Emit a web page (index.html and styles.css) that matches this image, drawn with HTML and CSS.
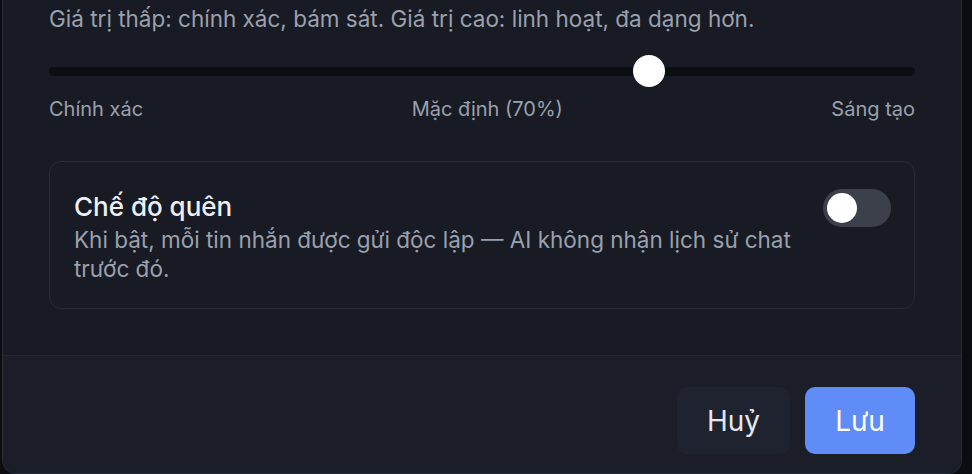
FILE: index.html
```html
<!DOCTYPE html>
<html lang="vi">
<head>
  <meta charset="UTF-8">
  <meta name="viewport" content="width=device-width, initial-scale=1.0">
  <title>Cài đặt</title>
  <link rel="stylesheet" href="styles.css">
</head>
<body>
  <div class="modal">
    <div class="modal-body">
      <p class="hint">Giá trị thấp: chính xác, bám sát. Giá trị cao: linh hoạt, đa dạng hơn.</p>

      <div class="slider">
        <div class="track">
          <span class="thumb" style="left: calc((100% - 32px) * 0.7)"></span>
        </div>
      </div>
      <div class="slider-labels">
        <span>Chính xác</span>
        <span>Mặc định (70%)</span>
        <span>Sáng tạo</span>
      </div>

      <div class="option-card">
        <div class="option-text">
          <h3>Chế độ quên</h3>
          <p>Khi bật, mỗi tin nhắn được gửi độc lập — AI không nhận lịch sử chat trước đó.</p>
        </div>
        <button class="toggle" type="button" aria-pressed="false"><span class="knob"></span></button>
      </div>
    </div>

    <div class="modal-footer">
      <button class="btn btn-cancel" type="button">Huỷ</button>
      <button class="btn btn-save" type="button">Lưu</button>
    </div>
  </div>
</body>
</html>
```

FILE: styles.css
```css
/* General */
body {
  margin: 0;
  padding: 0;
  background-color: #0c0d11;
  font-family: Inter, "Noto Sans", sans-serif;
  height: 474px;
  overflow: hidden;
}

/* Modal */
.modal {
  margin-left: 2px;
  width: 958px;
  height: 473px;
  background-color: #181b23;
  border: 1px solid #262b38;
  border-top: none;
  border-radius: 0 0 14px 14px;
  display: flex;
  flex-direction: column;
  overflow: hidden;
}

.modal-body {
  padding: 0 46px 46px;
  border-bottom: 1px solid #232838;
}

.hint {
  margin: 4px 0 0;
  color: #9aa1ae;
  font-size: 22.5px;
  line-height: 30px;
}

/* Slider */
.slider {
  margin-top: 21px;
  height: 32px;
  display: flex;
  align-items: center;
}

.track {
  position: relative;
  width: 100%;
  height: 9px;
  border-radius: 5px;
  background-color: #0c0e12;
}

.thumb {
  position: absolute;
  top: 50%;
  width: 32px;
  height: 32px;
  transform: translateY(-50%);
  border-radius: 50%;
  background-color: #fff;
}

.slider-labels {
  margin-top: 8px;
  display: flex;
  justify-content: space-between;
  color: #9aa1ae;
  font-size: 20px;
  line-height: 28px;
}

/* Option card */
.option-card {
  margin-top: 38px;
  padding: 29px 23px 25px 24px;
  border: 1px solid #262b38;
  border-radius: 12px;
  display: flex;
  justify-content: space-between;
  align-items: flex-start;
  gap: 24px;
}

.option-text h3 {
  margin: 0;
  color: #eef0f3;
  font-size: 26px;
  font-weight: 500;
  line-height: 32px;
}

.option-text p {
  margin: 2px 0 0;
  color: #9aa1ae;
  font-size: 22.5px;
  line-height: 29px;
  max-width: 740px;
}

.toggle {
  flex-shrink: 0;
  margin-top: -2px;
  width: 68px;
  height: 38px;
  padding: 4px;
  border: none;
  border-radius: 19px;
  background-color: #3b404b;
  display: flex;
  align-items: center;
}

.knob {
  width: 30px;
  height: 30px;
  border-radius: 50%;
  background-color: #fff;
}

/* Footer */
.modal-footer {
  flex: 1;
  background-color: #1b1e28;
  padding: 31px 46px 0;
  display: flex;
  justify-content: flex-end;
  align-items: flex-start;
  gap: 15px;
}

.btn {
  height: 67px;
  border: none;
  border-radius: 10px;
  font-family: inherit;
  font-size: 28px;
  cursor: pointer;
}

.btn-cancel {
  width: 113px;
  background-color: #1f2330;
  color: #e5e7eb;
}

.btn-save {
  width: 110px;
  background-color: #5f8cf6;
  color: #fff;
}
```
